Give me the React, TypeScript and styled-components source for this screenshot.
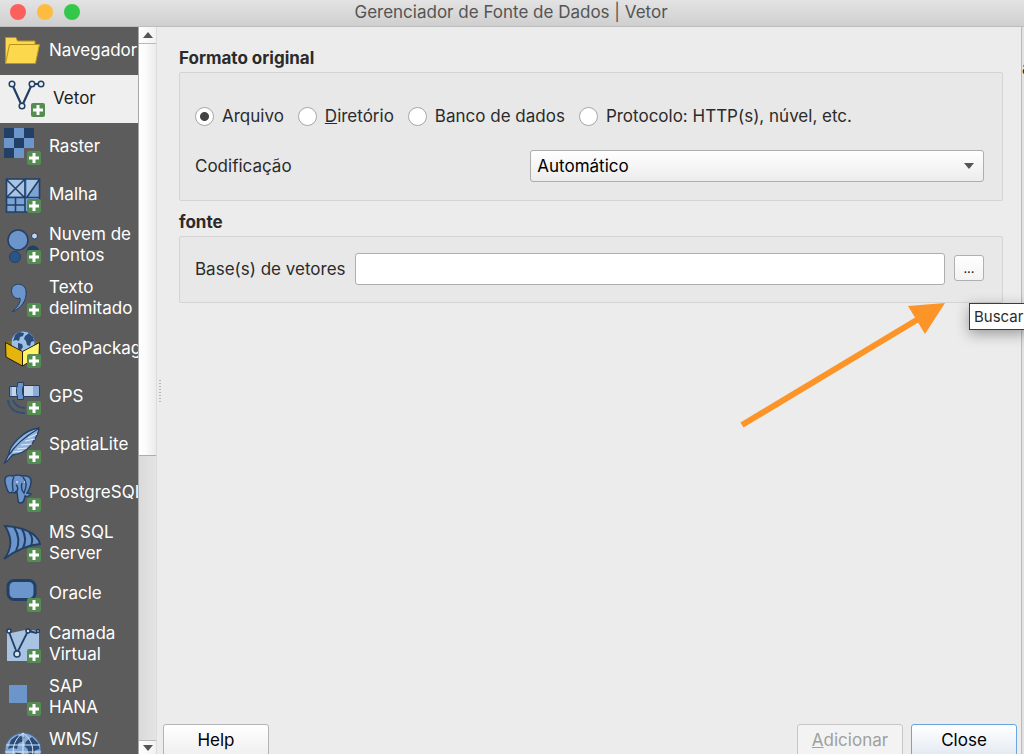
import React from "react";
import styled, { createGlobalStyle, css } from "styled-components";

const NAVY = "#223f66";
const BLUE = "#6b95cb";
const LIGHT = "#c4d5ea";

const GlobalStyle = createGlobalStyle`
  *, *::before, *::after { box-sizing: border-box; }
  body { margin: 0; background: #ececec; }
  body, button, input, select {
    font-family: Inter, "Liberation Sans", sans-serif;
    font-size: 17px;
    line-height: 21px;
    color: #2b2b2b;
  }
`;

const Window = styled.div`
  display: flex;
  flex-direction: column;
  height: 100vh;
  overflow: hidden;
  position: relative;
`;

const TitleBar = styled.header`
  display: grid;
  grid-template-columns: 1fr auto 1fr;
  align-items: center;
  height: 27px;
  flex: none;
  padding: 0 12px 2px 10px;
  background: linear-gradient(#e3e3e3, #cfcfcf);
  border-bottom: 1px solid #bdbdbd;
`;

const Lights = styled.div`
  display: flex;
  gap: 11px;
`;

const Light = styled.button<{ $color: string }>`
  width: 16px;
  height: 16px;
  padding: 0;
  border: 0;
  border-radius: 50%;
  background: ${(p) => p.$color};
`;

const Title = styled.h1`
  margin: 0;
  font-size: 17px;
  line-height: 21px;
  font-weight: 400;
  color: #545454;
`;

const Body = styled.div`
  display: flex;
  flex: 1;
  min-height: 0;
`;

const Sidebar = styled.nav`
  width: 139px;
  flex: none;
  overflow: hidden;
  background: #5c5c5c;
  border-right: 1px solid #a8a8a8;
`;

const NavItem = styled.a<{ $active?: boolean }>`
  display: flex;
  align-items: center;
  min-height: 48px;
  padding: 5px 0 6px;
  color: #fff;
  text-decoration: none;
  overflow: hidden;
  ${(p) =>
    p.$active &&
    css`
      background: #efefef;
      color: #1c1c1c;
      gap: 4px;
    `}
`;

const NavIcon = styled.svg`
  width: 49px;
  height: 48px;
  flex: none;
  margin: -5px 0 -6px;
  overflow: visible;
`;

const NavLabel = styled.span`
  white-space: pre;
`;

const ScrollBar = styled.div`
  display: flex;
  flex-direction: column;
  width: 18px;
  flex: none;
  background: linear-gradient(90deg, #dadada, #e4e4e4);
  border-right: 1px solid #dcdcdc;
`;

const ScrollButton = styled.button<{ $down?: boolean }>`
  display: flex;
  justify-content: center;
  align-items: center;
  height: ${(p) => (p.$down ? 14 : 17)}px;
  flex: none;
  padding: 0;
  border: 0 solid #b9b9b9;
  border-width: ${(p) => (p.$down ? "1px 0 0" : "0 0 1px")};
  background: linear-gradient(90deg, #fff, #f1f1f1);
`;

const ScrollThumb = styled.div`
  flex: 29;
  border-bottom: 1px solid #adadad;
  background: linear-gradient(90deg, #fff, #fbfbfb 40%, #ebebeb);
`;

const ScrollSpace = styled.div`
  flex: 20;
`;

const Splitter = styled.div`
  align-self: center;
  width: 2px;
  height: 22px;
  margin-left: 2px;
  margin-right: -4px;
  background: repeating-linear-gradient(#b4b4b4 0 1px, transparent 1px 3px);
`;

const Main = styled.main`
  display: flex;
  flex-direction: column;
  flex: 1;
  min-width: 0;
`;

const Form = styled.form`
  flex: 1;
  padding: 20px 18px 0 22px;
`;

const GroupTitle = styled.h2`
  margin: 0 0 3px;
  font-size: 17px;
  line-height: 22px;
  font-weight: 700;
`;

const Group = styled.div<{ $pad: string }>`
  margin-bottom: 10px;
  padding: ${(p) => p.$pad};
  border: 1px solid #d4d4d4;
  border-radius: 2px;
  background: #e8e8e8;
`;

const RadioRow = styled.div`
  display: flex;
  gap: 14px;
  margin-bottom: 24px;
`;

const RadioLabel = styled.label`
  display: flex;
  align-items: center;
  height: 20px;
  gap: 8px;
  white-space: nowrap;
`;

const Radio = styled.input`
  appearance: none;
  width: 19px;
  height: 19px;
  margin: 0;
  border: 1px solid #a6a6a6;
  border-radius: 50%;
  background: #fff;
  &:checked {
    background: radial-gradient(circle, #444 0 4px, #fff 5px);
  }
`;

const EncodingRow = styled.div`
  display: grid;
  grid-template-columns: 17fr 23fr;
  align-items: center;
`;

const SelectBox = styled.div`
  display: grid;
  align-items: center;
  & > * { grid-area: 1 / 1; }
  & > svg { justify-self: end; margin-right: 10px; pointer-events: none; }
`;

const Select = styled.select`
  appearance: none;
  width: 100%;
  height: 32px;
  padding: 0 6px;
  border: 1px solid #aeaeae;
  border-radius: 3px;
  background: linear-gradient(#fff, #ececec);
  color: #000;
`;

const SourceRow = styled.div`
  display: flex;
  align-items: center;
  gap: 9px;
  & > label { white-space: nowrap; }
`;

const PathInput = styled.input`
  flex: 1;
  min-width: 0;
  height: 32px;
  padding: 0 6px;
  border: 1px solid #aeaeae;
  border-radius: 3px;
  background: #fff;
`;

const Browse = styled.div`
  position: relative;
  display: flex;
  margin-bottom: 2px;
`;

const BrowseButton = styled.button`
  width: 30px;
  height: 26px;
  padding: 0;
  font-size: 13px;
  border: 1px solid #b0b0b0;
  border-radius: 3px;
  background: linear-gradient(#fff, #f3f3f3);
  color: #111;
`;

const Tooltip = styled.div`
  position: absolute;
  top: 48px;
  left: 15px;
  height: 27px;
  padding: 2px 4px;
  border: 1px solid #3c3c3c;
  background: #fff;
  font-size: 15px;
  white-space: nowrap;
  box-shadow: 0 4px 14px rgba(0, 0, 0, 0.35);
`;

const Arrow = styled.svg`
  position: absolute;
  top: 48px;
  right: 38px;
  width: 206px;
  height: 126px;
  pointer-events: none;
`;

const Footer = styled.footer`
  display: flex;
  gap: 8px;
  padding: 0 4px 0 6px;
  height: 30px;
  flex: none;
`;

const FooterSpace = styled.div`
  flex: 1;
`;

const PushButton = styled.button<{ $primary?: boolean }>`
  width: 106px;
  height: 33px;
  padding: 0;
  border: 1px solid ${(p) => (p.$primary ? "#6aa5e0" : "#b4b4b4")};
  border-radius: 3px;
  background: ${(p) =>
    p.$primary ? "linear-gradient(#fff, #e3e9f2)" : "linear-gradient(#fff, #efefef)"};
  color: #000;
  &:disabled {
    color: #a0a0a0;
    border-color: #c6c6c6;
    background: #f3f3f3;
  }
`;

const WindowBehind = styled.aside`
  width: 3px;
  flex: none;
  padding-top: 31px;
  overflow: hidden;
  background: #e2e2e2;
  border-left: 1px solid #b9b9b9;
`;

const Plus = ({ x = 27, y = 28 }: { x?: number; y?: number }) => (
  <g transform={`translate(${x} ${y})`}>
    <rect width="14" height="14" rx="2" fill="#548c52" />
    <path d="M7 2v10M2 7h10" stroke="#fff" strokeWidth="3" />
  </g>
);

const Continents = () => (
  <path
    d="M-8-6l4-3 5 1-1 3-3 1-1 4-3-1-3 1zM-5 2l4 1 1 3-3 4-2-3zM2-5l4-3 4 4 1 4-3 1-1 4-3-1-1-4-2-2z"
    fill="#294c79"
  />
);

const icons: Record<string, React.ReactNode> = {
  folder: (
    <g fill="#fbd84c" stroke="#b8941e" strokeWidth="1">
      <path d="M5.500 36V10.500H16l1.500 3.500H35v5" />
      <path d="M9.500 17.500H39.500L35.500 36.500H5.500z" />
    </g>
  ),
  vector: (
    <>
      <path d="M12 9l10 22L32 9h9" fill="none" stroke={NAVY} strokeWidth="2.200" />
      <g fill="#efefef" stroke={NAVY} strokeWidth="1.500">
        <circle cx="12" cy="9" r="2.800" />
        <circle cx="22" cy="31" r="2.800" />
        <circle cx="32" cy="9" r="2.800" />
        <circle cx="41" cy="9" r="2.800" />
      </g>
      <Plus x={31} />
    </>
  ),
  raster: (
    <>
      <path d="M4 5h10v10H4zM24 5h10v10H24zM14 15h10v10H14zM4 25h10v10H4z" fill={NAVY} />
      <path d="M14 5h10v10H14zM4 15h10v10H4zM24 15h10v10H24zM14 25h10v10H14z" fill={BLUE} />
      <Plus />
    </>
  ),
  mesh: (
    <>
      <rect x="6" y="8" width="33" height="33" fill="#7ca3d4" />
      <path d="M7 9h17v16H7zM28 25L39 9H27v16z" fill="#a9c3e3" />
      <path
        d="M6.500 8h33v33h-33zM6 26.500h33M25 8v33M6 34h19M15.500 27v14M7 9l17 17M24 9L7 26M39 9L27 26"
        fill="none"
        stroke={NAVY}
        strokeWidth="1.600"
      />
      <Plus />
    </>
  ),
  points: (
    <>
      <circle cx="33" cy="30" r="6.500" fill={NAVY} />
      <circle cx="15" cy="35" r="5.500" fill="#2c5587" stroke={NAVY} />
      <circle cx="18" cy="18" r="10" fill={BLUE} stroke={NAVY} strokeWidth="1.500" />
      <circle cx="34.500" cy="14" r="3" fill={LIGHT} stroke={NAVY} />
      <Plus />
    </>
  ),
  comma: (
    <>
      <path
        d="M11.500 15.500C12 7 25 7 26 16c1 10-5 17-14 21 5-5 9-9 8-14-4 2-8.500-2-8.500-7.500z"
        fill={BLUE}
        stroke={NAVY}
      />
      <Plus />
    </>
  ),
  geopackage: (
    <>
      <path d="M5 17l17-5 18 5-18 9z" fill="#8a6b00" />
      <circle cx="23" cy="18" r="12" fill="#9fc0e6" stroke="#45658e" />
      <g transform="translate(23 16)">
        <Continents />
      </g>
      <g stroke="#25200a" strokeWidth="1">
        <path d="M5.500 17.500L22.500 26.500V41L6 32z" fill="#e3b50d" />
        <path d="M39.500 17.500L22.500 26.500V41L39 31z" fill="#fff36a" />
      </g>
      <Plus y={29} />
    </>
  ),
  gps: (
    <>
      <path d="M8 27c1 9 8 13 17 13M13 27c2 5 6 8 12 8" fill="none" stroke="#2f4f78" strokeWidth="2" />
      <g stroke={NAVY}>
        <path d="M9.500 13.500h8v10h-8zM23.500 12.500h16v11h-16z" fill={LIGHT} />
        <path d="M33 13h6v10h-6zM10 14h2v9h-2z" fill="#8badd8" stroke="none" />
        <path d="M17.500 12.500v-3h6v3l-1 3v5l1 3v3h-6v-3l-1-3v-5z" fill={BLUE} />
      </g>
      <Plus />
    </>
  ),
  feather: (
    <>
      <path d="M39 7C31 8 24 12 18 18c-5 5-9 10-9 15L4.500 42c3-1 6-6 8-8 10-1 16-6 20-12 3-5 6-9 6.500-15z" fill="#91b4de" stroke={NAVY} strokeWidth="1.300" />
      <path d="M38 8C26 15 16 23 9 34" fill="none" stroke={NAVY} strokeWidth="1.300" />
      <path d="M21 24l11-1M17 28l10-1M25 20l10-2M28 17l9-4M13 31l9-1" stroke="#e2eaf5" strokeWidth="1" />
      <Plus y={29} />
    </>
  ),
  elephant: (
    <>
      <g fill={BLUE} stroke={NAVY} strokeWidth="1.400">
        <path d="M13 7c3-1 7-1 9 0 5-1 9 1 9 5 0 5-2 9-4 12l4 1c-1 2-4 3-6 2l-1 4c-1 4-6 4-6 0l-1-8-2 1-3-1c-3 3-5-2-6-6C4 11 4 5 13 7z" />
        <path d="M14 8c-3 5-1 10-1 14M15 23c4-1 3-6 1-7M23 8c4 5 4 9 1 16-3-3-3-6-2-10" fill="none" />
      </g>
      <path d="M16 13h2M24 13h1" stroke="#fff" />
      <Plus y={29} />
    </>
  ),
  sail: (
    <>
      <path d="M5 6c16 1 32 6 35 18-13 1-24 6-36 15C13 28 12 17 5 6z" fill={BLUE} stroke={NAVY} strokeWidth="1.800" />
      <path d="M14 7c5 8 6 16 2 24M22 9c4 7 4 13 1 19M29 12c4 5 4 9 2 14" fill="none" stroke={NAVY} strokeWidth="2" />
      <Plus />
    </>
  ),
  oracle: (
    <>
      <rect x="8" y="10.500" width="27" height="19" rx="6" fill={BLUE} stroke={NAVY} strokeWidth="3" />
      <Plus />
    </>
  ),
  virtual: (
    <>
      <path d="M7 9l4 3 14-3 3 3 5-3 6 2v29H7z" fill="#a9c3e3" />
      <path d="M9 11l8 21L28 10l9 2" fill="none" stroke={NAVY} strokeWidth="1.800" />
      <g fill="#d7e3f2" stroke={NAVY} strokeWidth="1.500">
        <circle cx="9" cy="10" r="2" />
        <circle cx="17" cy="33" r="3" />
        <circle cx="28" cy="10" r="2" />
        <circle cx="38" cy="10" r="1.500" />
      </g>
      <Plus />
    </>
  ),
  hana: (
    <>
      <rect x="9" y="11" width="18" height="18" fill={BLUE} />
      <Plus />
    </>
  ),
  globe: (
    <>
      <circle cx="23" cy="24" r="18" fill="#86a9d5" stroke="#4a6f9f" />
      <g transform="translate(23 22) scale(1.500)">
        <Continents />
      </g>
      <path d="M6 18h34M5 25h36M23 6v36M23 6c-13 9-13 27 0 36M23 6c13 9 13 27 0 36" fill="none" stroke="#dbe6f3" strokeWidth="1" />
    </>
  ),
};

const sources = [
  { label: "Navegador", icon: "folder" },
  { label: "Vetor", icon: "vector", active: true },
  { label: "Raster", icon: "raster" },
  { label: "Malha", icon: "mesh" },
  { label: "Nuvem de\nPontos", icon: "points" },
  { label: "Texto\ndelimitado", icon: "comma" },
  { label: "GeoPackage", icon: "geopackage" },
  { label: "GPS", icon: "gps" },
  { label: "SpatiaLite", icon: "feather" },
  { label: "PostgreSQL", icon: "elephant" },
  { label: "MS SQL\nServer", icon: "sail" },
  { label: "Oracle", icon: "oracle" },
  { label: "Camada\nVirtual", icon: "virtual" },
  { label: "SAP\nHANA", icon: "hana" },
  { label: "WMS/\n ", icon: "globe" },
];

const Triangle = ({ up }: { up?: boolean }) => (
  <svg width="10" height="6" viewBox="0 0 10 6" aria-hidden="true">
    <path d={up ? "M0 6L5 0l5 6z" : "M0 0h10L5 6z"} fill="#555" />
  </svg>
);

export default function App() {
  return (
    <Window>
      <GlobalStyle />
      <TitleBar>
        <Lights>
          <Light $color="#fc605c" aria-label="Fechar" />
          <Light $color="#fdbc40" aria-label="Minimizar" />
          <Light $color="#34c84a" aria-label="Ampliar" />
        </Lights>
        <Title>Gerenciador de Fonte de Dados | Vetor</Title>
      </TitleBar>
      <Body>
        <Sidebar>
          {sources.map((s) => (
            <NavItem key={s.label} href="#" $active={s.active}>
              <NavIcon viewBox="0 0 49 48" aria-hidden="true">
                {icons[s.icon]}
              </NavIcon>
              <NavLabel>{s.label}</NavLabel>
            </NavItem>
          ))}
        </Sidebar>
        <ScrollBar>
          <ScrollButton aria-label="Rolar para cima">
            <Triangle up />
          </ScrollButton>
          <ScrollThumb />
          <ScrollSpace />
          <ScrollButton $down aria-label="Rolar para baixo">
            <Triangle />
          </ScrollButton>
        </ScrollBar>
        <Splitter />
        <Main>
          <Form>
            <GroupTitle id="format">Formato original</GroupTitle>
            <Group $pad="33px 18px 18px 15px">
              <RadioRow role="radiogroup" aria-labelledby="format">
                <RadioLabel>
                  <Radio type="radio" name="format" defaultChecked />
                  <span>Arquivo</span>
                </RadioLabel>
                <RadioLabel>
                  <Radio type="radio" name="format" />
                  <span><u>D</u>iretório</span>
                </RadioLabel>
                <RadioLabel>
                  <Radio type="radio" name="format" />
                  <span>Banco de dados</span>
                </RadioLabel>
                <RadioLabel>
                  <Radio type="radio" name="format" />
                  <span>Protocolo: HTTP(s), núvel, etc.</span>
                </RadioLabel>
              </RadioRow>
              <EncodingRow>
                <label htmlFor="encoding">Codificação</label>
                <SelectBox>
                  <Select id="encoding">
                    <option>Automático</option>
                  </Select>
                  <Triangle />
                </SelectBox>
              </EncodingRow>
            </Group>
            <GroupTitle>fonte</GroupTitle>
            <Group $pad="16px 18px 17px 15px">
              <SourceRow>
                <label htmlFor="path">Base(s) de vetores</label>
                <PathInput id="path" type="text" />
                <Browse>
                  <BrowseButton type="button" aria-describedby="browse-tip">...</BrowseButton>
                  <Tooltip id="browse-tip" role="tooltip">Buscar</Tooltip>
                  <Arrow viewBox="0 0 206 126" aria-hidden="true">
                    <path d="M2 122L180 15" stroke="#fd9427" strokeWidth="6" />
                    <path d="M205 0L168 3l17 28z" fill="#fd9427" />
                  </Arrow>
                </Browse>
              </SourceRow>
            </Group>
          </Form>
          <Footer>
            <PushButton>Help</PushButton>
            <FooterSpace />
            <PushButton disabled><u>A</u>dicionar</PushButton>
            <PushButton $primary>Close</PushButton>
          </Footer>
        </Main>
        <WindowBehind>a</WindowBehind>
      </Body>
    </Window>
  );
}
